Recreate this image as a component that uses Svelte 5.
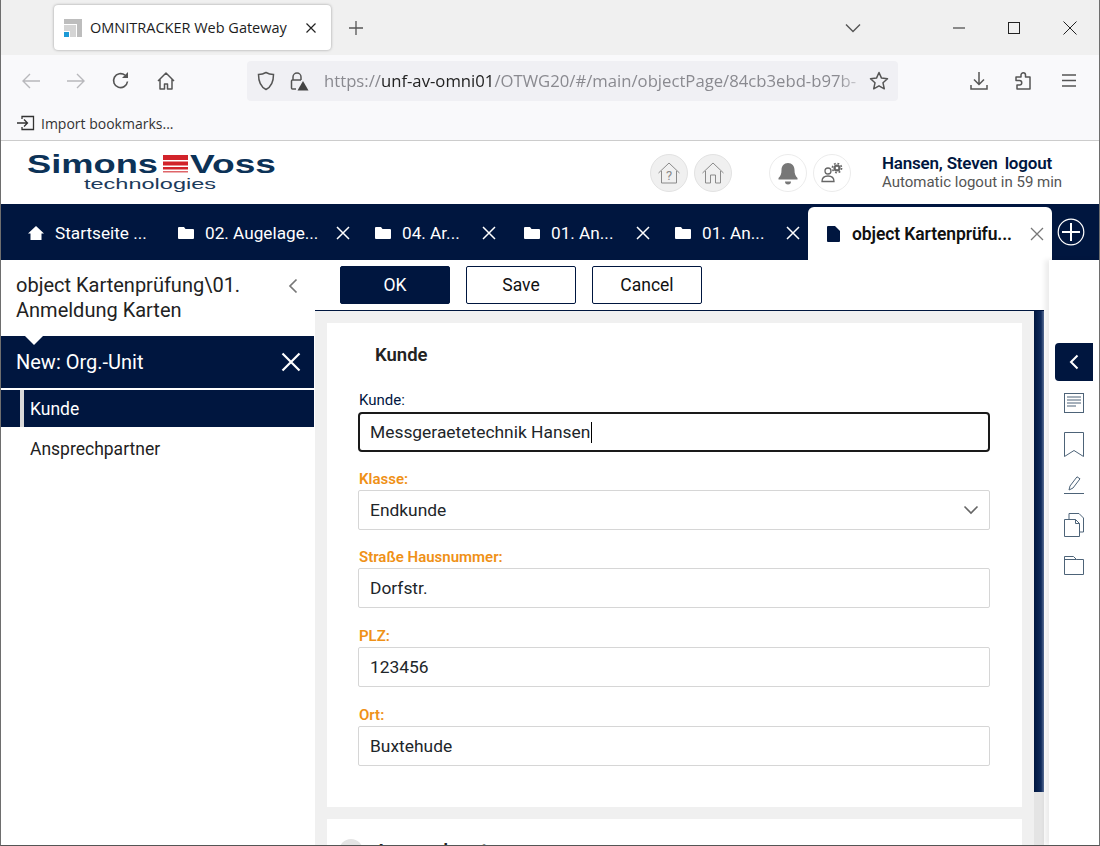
<script>
  const appTabs = [
    { label: 'Startseite ...', icon: 'home', width: 165, pad: 27 },
    { label: '02. Augelage...', icon: 'folder', width: 197, pad: 12, closeGap: 13 },
    { label: '04. Ar...', icon: 'folder', width: 149, pad: 12, closeGap: 16 },
    { label: '01. An...', icon: 'folder', width: 151, pad: 12, closeGap: 13 },
    { label: '01. An...', icon: 'folder', width: 145, pad: 12, closeGap: 8 }
  ]
  const fields = [
    { label: 'Straße Hausnummer:', value: 'Dorfstr.' },
    { label: 'PLZ:', value: '123456' },
    { label: 'Ort:', value: 'Buxtehude' }
  ]
</script>

<div class="window">
  <div class="tabstrip">
    <div class="browser-tab">
      <svg class="favicon" width="18" height="18" viewBox="0 0 18 18">
        <path d="M0 0h18v18h-5V5H0z" fill="#bdbdbd" />
        <path d="M0 6h12v12H6v-6H0z" fill="#d4d4d4" />
        <rect x="0" y="13" width="5" height="5" fill="#1c9ad6" />
      </svg>
      <span class="browser-tab-title">OMNITRACKER Web Gateway</span>
      <svg width="12" height="12" viewBox="0 0 12 12"><path d="M1.5 1.5l9 9M10.500 1.500l-9 9" stroke="#222" stroke-width="1.200" /></svg>
    </div>
    <svg class="newtab" width="16" height="16" viewBox="0 0 16 16"><path d="M8 1v14M1 8h14" stroke="#555" stroke-width="1.300" /></svg>
    <svg class="tablist" width="16" height="10" viewBox="0 0 16 10"><path d="M1 1.500l7 7 7-7" fill="none" stroke="#555" stroke-width="1.400" /></svg>
    <div class="winctl">
      <svg width="12" height="12" viewBox="0 0 12 12"><path d="M0 6h12" stroke="#222" stroke-width="1" /></svg>
      <svg width="12" height="12" viewBox="0 0 12 12"><rect x=".5" y=".5" width="11" height="11" fill="none" stroke="#222" /></svg>
      <svg width="14" height="14" viewBox="0 0 14 14"><path d="M.5.500l13 13M13.500.500l-13 13" stroke="#222" stroke-width="1" /></svg>
    </div>
  </div>

  <div class="toolbar">
    <svg class="tool first" width="20" height="20" viewBox="0 0 20 20"><path d="M19 10H2M9 3l-7 7 7 7" fill="none" stroke="#b8b8bc" stroke-width="1.400" /></svg>
    <svg class="tool" width="20" height="20" viewBox="0 0 20 20"><path d="M1 10h17M11 3l7 7-7 7" fill="none" stroke="#b8b8bc" stroke-width="1.400" /></svg>
    <svg class="tool" width="20" height="20" viewBox="0 0 20 20"><path d="M16.500 10.500A7 7 0 1 1 14 4.200" fill="none" stroke="#555" stroke-width="1.600" /><path d="M17 1v6h-6" fill="#555" /></svg>
    <svg class="tool" width="20" height="20" viewBox="0 0 20 20"><path d="M2 10l8-8 8 8M4 8.500V18h4.500v-5h3v5H16V8.500" fill="none" stroke="#555" stroke-width="1.500" stroke-linejoin="round" /></svg>
    <div class="urlbar">
      <svg width="18" height="20" viewBox="0 0 18 20"><path d="M9 1.500c2.500 1.500 5 2 7.500 2 0 7-1.500 12-7.500 15C3 15.500 1.500 10.500 1.500 3.500c2.500 0 5-.5 7.500-2z" fill="none" stroke="#555" stroke-width="1.500" /></svg>
      <svg class="lock" width="20" height="20" viewBox="0 0 20 20">
        <path d="M4 9V6a4 4 0 0 1 8 0v3" fill="none" stroke="#555" stroke-width="1.500" />
        <path d="M7 18H3.500a1 1 0 0 1-1-1V10a1 1 0 0 1 1-1H12" fill="none" stroke="#555" stroke-width="1.500" />
        <path d="M14 10l5.500 9.500h-11z" fill="#444" />
      </svg>
      <div class="url"><span class="dim">https://</span><span class="host">unf-av-omni01</span><span class="dim">/OTWG20/#/main/objectPage/84cb3ebd-b97b-</span></div>
      <svg class="star" width="20" height="20" viewBox="0 0 20 20"><path d="M10 1.500l2.500 5.600 6 .7-4.500 4 1.300 6L10 14.800l-5.300 3 1.300-6-4.500-4 6-.7z" fill="none" stroke="#555" stroke-width="1.500" stroke-linejoin="round" /></svg>
    </div>
    <svg class="tool right" width="20" height="20" viewBox="0 0 20 20"><path d="M10 1v12M5 8.500l5 5 5-5M2 14v4h16v-4" fill="none" stroke="#555" stroke-width="1.500" /></svg>
    <svg class="tool" width="20" height="20" viewBox="0 0 20 20"><path d="M2 6h5V4a2.200 2.200 0 0 1 4.500 0v2H16v12H3v-4h2.500a2 2 0 0 0 0-4.500H2z" fill="none" stroke="#555" stroke-width="1.500" stroke-linejoin="round" /></svg>
    <svg class="tool" width="20" height="20" viewBox="0 0 20 20"><path d="M3 4h14M3 9.500h14M3 15h14" stroke="#555" stroke-width="1.500" /></svg>
  </div>

  <div class="bookmarks">
    <svg width="18" height="16" viewBox="0 0 18 16"><path d="M5 4V1.500h11.500v13H5V12M0 8h10M7 4.500L10.500 8 7 11.500" fill="none" stroke="#333" stroke-width="1.300" /></svg>
    <span>Import bookmarks...</span>
  </div>

  <header class="app-header">
    <div class="logo">
      <svg width="250" height="46" viewBox="0 0 250 46">
        <text x="0" y="23" class="logo-main" textLength="131" lengthAdjust="spacingAndGlyphs">Simons</text>
        <g fill="#d2232a">
          <rect x="136" y="5" width="25" height="5" />
          <rect x="136" y="11.500" width="25" height="4" />
          <rect x="136" y="17" width="25" height="2.500" />
          <rect x="136" y="21" width="25" height="1.500" opacity=".7" />
        </g>
        <text x="163" y="23" class="logo-main" textLength="86" lengthAdjust="spacingAndGlyphs">Voss</text>
        <text x="57" y="39" class="logo-sub" textLength="132" lengthAdjust="spacingAndGlyphs">technologies</text>
      </svg>
    </div>
    <div class="round grey first-round">
      <svg width="24" height="24" viewBox="0 0 24 24"><path d="M1.500 12L12 2l10.500 10M4.500 10v12h15V10" fill="none" stroke="#8a8a8a" stroke-width="1" /><text x="12" y="19" class="qmark">?</text></svg>
    </div>
    <div class="round grey">
      <svg width="24" height="24" viewBox="0 0 24 24"><path d="M1.500 12L12 2l10.500 10M4.500 10v12h5v-8h5v8h5V10" fill="none" stroke="#8a8a8a" stroke-width="1" /></svg>
    </div>
    <div class="round second-group">
      <svg width="20" height="24" viewBox="0 0 20 24"><path d="M10 2c4 0 6.500 3 6.500 7 0 4 1 6 3 8v1.500H.5V17c2-2 3-4 3-8 0-4 2.500-7 6.500-7z" fill="#777" /><path d="M7 20.500h6a3 3 0 0 1-6 0z" fill="#777" /></svg>
    </div>
    <div class="round">
      <svg width="24" height="24" viewBox="0 0 24 24">
        <circle cx="8" cy="10" r="3" fill="none" stroke="#666" stroke-width="1.300" />
        <path d="M2 20.500c0-4 3-5.500 6-5.500s6 1.500 6 5.500z" fill="none" stroke="#666" stroke-width="1.300" />
        <circle cx="17" cy="7" r="3.600" fill="#666" />
        <circle cx="17" cy="7" r="4.600" fill="none" stroke="#666" stroke-width="1.600" stroke-dasharray="1.800 1.800" />
        <circle cx="17" cy="7" r="1.300" fill="#fff" />
      </svg>
    </div>
    <div class="user">
      <div class="user-name"><span>Hansen, Steven</span><span>logout</span></div>
      <div class="user-note">Automatic logout in 59 min</div>
    </div>
  </header>

  <nav class="app-tabs">
    {#each appTabs as tab}
      <div class="app-tab" style="width: {tab.width}px; padding-left: {tab.pad}px">
        {#if tab.icon === 'home'}
          <svg width="16" height="16" viewBox="0 0 16 16"><path d="M8 1L0 8.500h2.500V15h11V8.500H16z" fill="#fff" /></svg>
        {:else}
          <svg width="16" height="14" viewBox="0 0 16 14"><path d="M0 2a1 1 0 0 1 1-1h5l1.500 2H15a1 1 0 0 1 1 1v8a1 1 0 0 1-1 1H1a1 1 0 0 1-1-1z" fill="#fff" /></svg>
        {/if}
        <span class="app-tab-label">{tab.label}</span>
        {#if tab.closeGap}
          <svg class="tab-x" style="margin-right: {tab.closeGap}px" width="14" height="14" viewBox="0 0 14 14"><path d="M1 1l12 12M13 1L1 13" stroke="#fff" stroke-width="1.500" /></svg>
        {/if}
      </div>
    {/each}
    <div class="app-tab active">
      <svg width="13" height="16" viewBox="0 0 13 16"><path d="M1 0h7l5 5v10a1 1 0 0 1-1 1H1a1 1 0 0 1-1-1V1a1 1 0 0 1 1-1z" fill="#00163f" /></svg>
      <span class="app-tab-label">object Kartenprüfu...</span>
      <svg class="tab-x" width="14" height="14" viewBox="0 0 14 14"><path d="M1 1l12 12M13 1L1 13" stroke="#777" stroke-width="1.300" /></svg>
    </div>
    <svg class="add-tab" width="28" height="28" viewBox="0 0 28 28"><circle cx="14" cy="14" r="12.800" fill="none" stroke="#fff" stroke-width="1.200" /><path d="M14 5v18M5 14h18" stroke="#fff" stroke-width="2" /></svg>
  </nav>

  <div class="body">
    <aside class="sidebar">
      <div class="side-title">
        <span>object Kartenprüfung\01. Anmeldung Karten</span>
        <svg width="10" height="16" viewBox="0 0 10 16"><path d="M8.500 1.500L2 8l6.500 6.500" fill="none" stroke="#777" stroke-width="1.700" /></svg>
      </div>
      <div class="side-head">
        <span>New: Org.-Unit</span>
        <svg width="20" height="20" viewBox="0 0 20 20"><path d="M1.500 1.500l17 17M18.500 1.500l-17 17" stroke="#fff" stroke-width="2.200" /></svg>
      </div>
      <div class="side-item selected"><span>Kunde</span></div>
      <div class="side-item"><span>Ansprechpartner</span></div>
    </aside>

    <main class="main">
      <div class="actions">
        <button class="btn primary">OK</button>
        <button class="btn">Save</button>
        <button class="btn">Cancel</button>
      </div>
      <div class="scroller">
        <div class="content">
          <section class="card">
            <h2>Kunde</h2>
            <div class="field first-field">
              <label class="plain" for="f-kunde">Kunde:</label>
              <div id="f-kunde" class="input focused">Messgeraetetechnik Hansen<i class="caret"></i></div>
            </div>
            <div class="field">
              <div class="lbl">Klasse:</div>
              <div class="input select">
                <span>Endkunde</span>
                <svg width="16" height="10" viewBox="0 0 16 10"><path d="M1.500 1.500L8 8l6.500-6.500" fill="none" stroke="#666" stroke-width="1.600" /></svg>
              </div>
            </div>
            {#each fields as f}
              <div class="field">
                <div class="lbl">{f.label}</div>
                <div class="input">{f.value}</div>
              </div>
            {/each}
          </section>
          <section class="card second">
            <div class="collapse-row"><i class="dot"></i><h2>Ansprechpartner</h2></div>
          </section>
        </div>
        <div class="scrollbar"><div class="thumb"></div></div>
      </div>
    </main>

    <aside class="rail">
      <div class="rail-toggle">
        <svg width="10" height="16" viewBox="0 0 10 16"><path d="M8.500 1.500L2 8l6.500 6.500" fill="none" stroke="#fff" stroke-width="2" /></svg>
      </div>
      <svg class="rail-icon doc" width="20" height="20" viewBox="0 0 20 20"><rect x=".5" y=".5" width="19" height="19" fill="none" stroke="#4d6378" /><path d="M3 4h14M3 7h14M3 10h14M3 13h9" stroke="#4d6378" /></svg>
      <svg class="rail-icon" width="20" height="25" viewBox="0 0 20 25"><path d="M.5.500h19v24L10 18.500.5 24.500z" fill="none" stroke="#4d6378" /></svg>
      <svg class="rail-icon" width="20" height="18" viewBox="0 0 20 18"><path d="M5 14l1-4L13 .8l3 2L9 12zM0 17.500h20" fill="none" stroke="#4d6378" /></svg>
      <svg class="rail-icon" width="20" height="24" viewBox="0 0 20 24"><path d="M.5 6.500h11l4 4v13H.5zM5 6V.5h10l4.500 4.500v14h-4M11.500 6.500v4h4" fill="none" stroke="#4d6378" /></svg>
      <svg class="rail-icon" width="20" height="19" viewBox="0 0 20 19"><path d="M.5 18.500V.5h9l3 3h7v15zM.5 3.500h12" fill="none" stroke="#4d6378" /></svg>
    </aside>
  </div>
</div>

<style>
  :global(body) {
    margin: 0;
    overflow: hidden;
  }
  .window {
    width: 1100px;
    height: 846px;
    box-sizing: border-box;
    border-left: 1px solid #6e6e6e;
    border-right: 1px solid #6e6e6e;
    border-bottom: 1px solid #555;
    display: flex;
    flex-direction: column;
    overflow: hidden;
    background: #fff;
    font-family: Roboto, sans-serif;
    color: #111;
  }
  .tabstrip {
    height: 55px;
    flex: none;
    background: #f0f0f0;
    display: flex;
    align-items: center;
  }
  .browser-tab {
    margin: 0 0 0 53px;
    width: 277px;
    height: 45px;
    box-sizing: border-box;
    padding: 0 14px 0 10px;
    background: #fff;
    border-radius: 4px;
    box-shadow: 0 0 3px rgba(0, 0, 0, 0.35);
    display: flex;
    align-items: center;
    font-family: "Open Sans", sans-serif;
    font-size: 14.500px;
    color: #1c1c1c;
  }
  .browser-tab-title {
    flex: 1;
    margin-left: 8px;
    white-space: nowrap;
  }
  .newtab {
    margin-left: 17px;
  }
  .tablist {
    margin-left: 481px;
  }
  .winctl {
    flex: 1;
    display: flex;
    justify-content: flex-end;
    align-items: center;
    gap: 43px;
    padding-right: 22px;
  }
  .toolbar {
    height: 51px;
    flex: none;
    background: #f9f9fb;
    display: flex;
    align-items: center;
  }
  .tool {
    margin-left: 25px;
    flex: none;
  }
  .tool.first {
    margin-left: 20px;
  }
  .tool.right {
    margin-left: 71px;
  }
  .urlbar {
    width: 651px;
    height: 40px;
    box-sizing: border-box;
    margin-left: 71px;
    padding: 0 9px 0 10px;
    background: #f0f0f4;
    border-radius: 4px;
    display: flex;
    align-items: center;
    font-family: "Open Sans", sans-serif;
    font-size: 16.700px;
  }
  .lock {
    margin-left: 14px;
  }
  .url {
    flex: 1;
    margin-left: 15px;
    white-space: nowrap;
    overflow: hidden;
    color: #8a8a90;
    -webkit-mask-image: linear-gradient(to right, #000 94%, transparent 100%);
    mask-image: linear-gradient(to right, #000 94%, transparent 100%);
  }
  .host {
    color: #222;
  }
  .star {
    flex: none;
  }
  .bookmarks {
    height: 34px;
    flex: none;
    background: #f9f9fb;
    border-bottom: 1px solid #ccc;
    display: flex;
    align-items: center;
    padding-left: 16px;
    gap: 6px;
    font-family: "Open Sans", sans-serif;
    font-size: 14px;
    color: #333;
  }
  .app-header {
    height: 63px;
    flex: none;
    display: flex;
    align-items: center;
    background: #fff;
  }
  .logo {
    width: 250px;
    margin-left: 26px;
    height: 46px;
  }
  .logo-main {
    font-family: "Liberation Sans", sans-serif;
    font-weight: 700;
    font-size: 25px;
    fill: #0c3257;
  }
  .logo-sub {
    font-family: "Liberation Sans", sans-serif;
    font-size: 14.500px;
    fill: #1c3b5c;
  }
  .qmark {
    font-family: Roboto, sans-serif;
    font-size: 13px;
    fill: #8a8a8a;
    text-anchor: middle;
  }
  .round {
    width: 36px;
    height: 36px;
    flex: none;
    border-radius: 50%;
    border: 1px solid #ececec;
    display: flex;
    align-items: center;
    justify-content: center;
    margin-left: 6px;
  }
  .round.grey {
    background: #f0f0f0;
    border-color: #e2e2e2;
  }
  .first-round {
    margin-left: 373px;
  }
  .second-group {
    margin-left: 37px;
  }
  .user {
    margin-left: 31px;
    white-space: nowrap;
  }
  .user-name {
    display: flex;
    gap: 7px;
    font-size: 17px;
    font-weight: 600;
    color: #00163f;
    letter-spacing: -0.2px;
    line-height: 18px;
  }
  .user-note {
    font-size: 15px;
    color: #555;
    line-height: 20px;
  }
  .app-tabs {
    height: 56px;
    flex: none;
    background: #00163f;
    display: flex;
    align-items: center;
    color: #fff;
    font-size: 17.200px;
  }
  .app-tab {
    height: 100%;
    box-sizing: border-box;
    padding-top: 2px;
    display: flex;
    align-items: center;
    flex: none;
    white-space: nowrap;
  }
  .app-tab-label {
    margin-left: 11px;
  }
  .tab-x {
    margin-left: auto;
  }
  .app-tab.active {
    width: 244px;
    height: 53px;
    margin-top: 3px;
    align-self: flex-start;
    padding: 0 8px 0 19px;
    background: #fff;
    border-radius: 6px 6px 0 0;
    color: #111;
    font-size: 17.500px;
    font-weight: 600;
    letter-spacing: -0.1px;
  }
  .app-tab.active .app-tab-label {
    margin-left: 12px;
  }
  .add-tab {
    margin-left: 5px;
  }
  .body {
    flex: 1;
    min-height: 0;
    display: flex;
  }
  .sidebar {
    width: 313px;
    flex: none;
    background: #fff;
    font-size: 17.500px;
  }
  .side-title {
    height: 76px;
    box-sizing: border-box;
    padding: 13px 16px 0 15px;
    display: flex;
    justify-content: space-between;
    font-size: 20px;
    line-height: 25px;
    color: #222;
  }
  .side-title span {
    width: 250px;
  }
  .side-title svg {
    margin-top: 5px;
  }
  .side-head {
    position: relative;
    height: 52px;
    background: #00163f;
    color: #fff;
    display: flex;
    align-items: center;
    justify-content: space-between;
    padding: 0 13px 0 15px;
    font-size: 20px;
  }
  .side-head::before {
    content: "";
    position: absolute;
    left: 24px;
    top: 0;
    border: 9px solid transparent;
    border-top-color: #fff;
    border-bottom: 0;
  }
  .side-item {
    height: 37px;
    margin-top: 2px;
    display: flex;
    align-items: center;
    padding-left: 29px;
    color: #222;
  }
  .side-item + .side-item {
    margin-top: 3px;
  }
  .side-item.selected {
    background: #00163f;
    color: #fff;
    position: relative;
  }
  .side-item.selected::before {
    content: "";
    position: absolute;
    left: 19px;
    top: 0;
    bottom: 0;
    width: 4px;
    background: #d9d9d9;
  }
  .main {
    width: 729px;
    flex: none;
    margin-left: 1px;
    display: flex;
    flex-direction: column;
  }
  .actions {
    height: 50px;
    flex: none;
    box-sizing: border-box;
    padding: 6px 0 0 25px;
    display: flex;
    gap: 16px;
    align-items: flex-start;
    background: #fff;
  }
  .btn {
    width: 110px;
    height: 38px;
    background: #fff;
    color: #111;
    border: 1px solid #00163f;
    border-radius: 2px;
    font-family: Roboto, sans-serif;
    font-size: 17.500px;
    padding: 0 0 1px;
  }
  .btn.primary {
    background: #00163f;
    color: #fff;
  }
  .scroller {
    flex: 1;
    min-height: 0;
    display: flex;
    border-top: 1px solid #00163f;
    overflow: hidden;
  }
  .content {
    flex: 1;
    min-width: 0;
    background: #f0f0f0;
    padding: 12px 12px 0 12px;
  }
  .scrollbar {
    width: 10px;
    flex: none;
    background: #e4e4e4;
  }
  .thumb {
    height: 481px;
    background: linear-gradient(to right, #00163f, #0f2a5c 70%, #5a6f96);
  }
  .card {
    width: 695px;
    height: 484px;
    box-sizing: border-box;
    background: #fff;
    padding: 22px 32px 0 31px;
  }
  .card.second {
    margin-top: 12px;
    height: 60px;
    padding: 20px 0 0 12px;
  }
  .collapse-row {
    display: flex;
    align-items: center;
    gap: 12px;
  }
  .dot {
    width: 24px;
    height: 24px;
    border-radius: 50%;
    background: #e4e4e4;
    flex: none;
  }
  h2 {
    margin: 0 0 0 17px;
    font-size: 18.500px;
    font-weight: 600;
    line-height: 21px;
    color: #222;
  }
  .collapse-row h2 {
    margin: 0;
  }
  .field {
    margin-bottom: 19.670px;
  }
  .field.first-field {
    margin-top: 26px;
    margin-bottom: 18.800px;
  }
  .plain, .lbl {
    display: block;
    padding-left: 1px;
    font-size: 15px;
    line-height: 17px;
    margin-bottom: 2px;
  }
  .plain {
    color: #00163f;
    margin-bottom: 3px;
  }
  .lbl {
    color: #ef9117;
    font-weight: 600;
  }
  .input {
    height: 40px;
    box-sizing: border-box;
    border: 1px solid #d6d6d6;
    border-radius: 2px;
    padding: 0 11px;
    display: flex;
    align-items: center;
    font-size: 17.400px;
    color: #212529;
    background: #fff;
  }
  .input.focused {
    border: 2px solid #1a1a1a;
    border-radius: 4px;
    padding: 0 10px;
  }
  .caret {
    width: 1px;
    height: 21px;
    background: #000;
    margin-left: 1px;
  }
  .select {
    justify-content: space-between;
    padding-right: 10px;
  }
  .rail {
    width: 50px;
    flex: none;
    margin-left: 5px;
    background: #fff;
    box-shadow: -4px 0 5px rgba(0, 0, 0, 0.08);
    display: flex;
    flex-direction: column;
    align-items: center;
  }
  .rail-toggle {
    width: 38px;
    height: 38px;
    flex: none;
    margin-top: 83px;
    background: #00163f;
    border-radius: 4px 0 0 4px;
    display: flex;
    align-items: center;
    justify-content: center;
  }
  .rail-icon {
    margin-top: 19px;
    flex: none;
  }
  .rail-icon.doc {
    margin-top: 12px;
  }
</style>
